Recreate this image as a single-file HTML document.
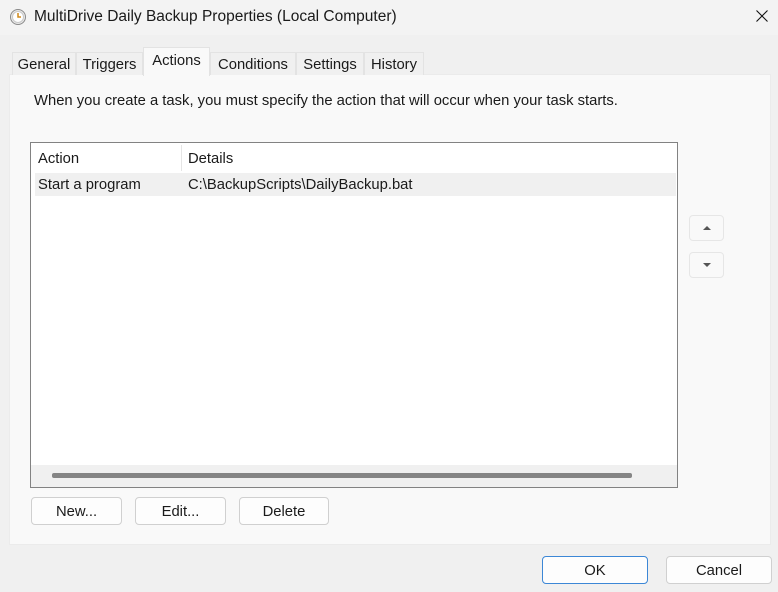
<!DOCTYPE html>
<html><head><meta charset="utf-8"><style>
*{margin:0;padding:0;box-sizing:border-box}
body{width:778px;height:592px;background:#f0f0f0;font-family:"Liberation Sans",sans-serif;font-size:14.8px;color:#1a1a1a;position:relative;overflow:hidden}
.abs{position:absolute}
.title{left:0;top:0;width:778px;height:35px;background:#f3f3f3}
.tab{top:52px;height:23px;border:1px solid #e3e3e3;border-bottom:none;background:#f0f0f0;text-align:center;line-height:24px}
.panel{left:9px;top:74px;width:762px;height:471px;background:#f9f9f9;border:1px solid #ebebeb}
.btn{height:28px;background:#fdfdfd;border:1px solid #d0d0d0;border-radius:4px;text-align:center;line-height:28px}
</style></head><body>
<div class="abs title"></div>
<svg class="abs" style="left:9px;top:8px" width="18" height="18" viewBox="0 0 18 18"><circle cx="9" cy="9" r="7.5" fill="#e8e8e8" stroke="#8a8a8a"/><circle cx="9" cy="9" r="5.5" fill="#fff" stroke="#c9c9c9"/><path d="M9 5v4h3" stroke="#d08a1a" stroke-width="1.5" fill="none"/></svg>
<div class="abs" style="left:34px;top:8px;font-size:15.5px">MultiDrive Daily Backup Properties (Local Computer)</div>
<svg class="abs" style="left:756px;top:10px" width="12" height="12"><path d="M0.5 0.5L11.5 11.5M11.5 0.5L0.5 11.5" stroke="#111" stroke-width="1.1"/></svg>
<div class="abs panel"></div>
<div class="abs tab" style="left:12px;width:64px">General</div>
<div class="abs tab" style="left:76px;width:67px">Triggers</div>
<div class="abs tab" style="left:210px;width:86px">Conditions</div>
<div class="abs tab" style="left:296px;width:68px">Settings</div>
<div class="abs tab" style="left:364px;width:60px">History</div>
<div class="abs tab" style="left:143px;top:47px;width:67px;height:29px;background:#f9f9f9;line-height:27px">Actions</div>
<div class="abs" style="left:34px;top:93px">When you create a task, you must specify the action that will occur when your task starts.</div>
<div class="abs" style="left:30px;top:142px;width:648px;height:346px;background:#fff;border:1px solid #828282">
 <div class="abs" style="left:150px;top:2px;width:1px;height:26px;background:#e5e5e5"></div>
 <div class="abs" style="left:7px;top:8px">Action</div>
 <div class="abs" style="left:157px;top:8px">Details</div>
 <div class="abs" style="left:4px;top:30px;width:641px;height:23px;background:#f0f0f0"></div>
 <div class="abs" style="left:7px;top:34px">Start a program</div>
 <div class="abs" style="left:157px;top:34px">C:\BackupScripts\DailyBackup.bat</div>
 <div class="abs" style="left:0;top:322px;width:646px;height:22px;background:#f0f0f0"></div>
 <div class="abs" style="left:21px;top:330px;width:580px;height:5px;border-radius:2px;background:#858585"></div>
</div>
<div class="abs btn" style="left:689px;top:215px;width:35px;height:26px;border-color:#e6e6e6;background:#f9f9f9;line-height:20px"><svg width="10" height="6" style="margin-top:9px"><path d="M1 5L5 1L9 5Z" fill="#555"/></svg></div>
<div class="abs btn" style="left:689px;top:252px;width:35px;height:26px;border-color:#e6e6e6;background:#f9f9f9;line-height:20px"><svg width="10" height="6" style="margin-top:9px"><path d="M1 1L5 5L9 1Z" fill="#555"/></svg></div>
<div class="abs btn" style="left:31px;top:497px;width:91px">New...</div>
<div class="abs btn" style="left:135px;top:497px;width:91px">Edit...</div>
<div class="abs btn" style="left:239px;top:497px;width:90px">Delete</div>
<div class="abs btn" style="left:542px;top:556px;width:106px;border-color:#3c87d6">OK</div>
<div class="abs btn" style="left:666px;top:556px;width:106px">Cancel</div>
</body></html>
